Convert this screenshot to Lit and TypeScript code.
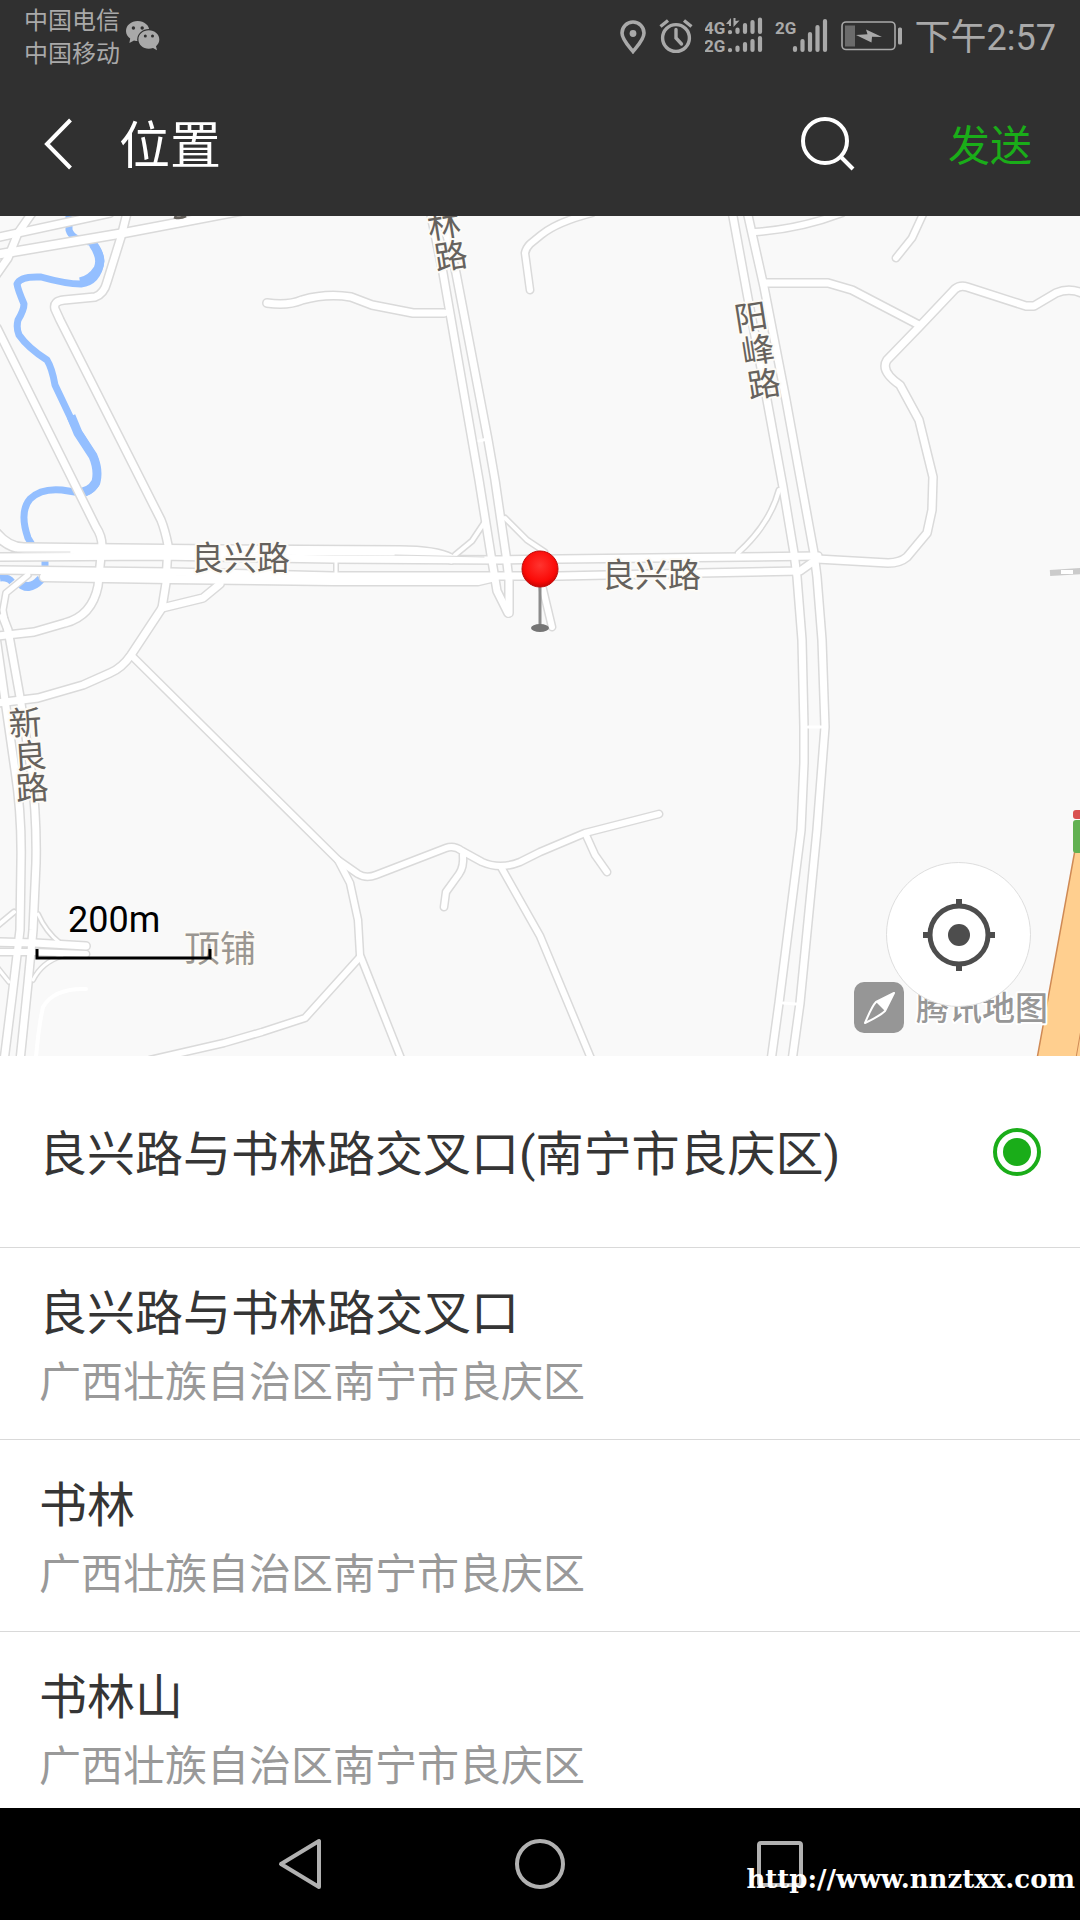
import { LitElement, html, svg, css } from "lit";
import { customElement, property, state } from "lit/decorators.js";

interface Place {
  name: string;
  address?: string;
}

interface Road {
  d: string;
  w: number;
}

interface Glyph {
  c: string;
  x: number;
  y: number;
  r: number;
}

const PLACES: Place[] = [
  { name: "良兴路与书林路交叉口(南宁市良庆区)" },
  { name: "良兴路与书林路交叉口", address: "广西壮族自治区南宁市良庆区" },
  { name: "书林", address: "广西壮族自治区南宁市良庆区" },
  { name: "书林山", address: "广西壮族自治区南宁市良庆区" },
];

const ROADS: Road[] = [
  // north-west
  { d: "M-5 22L110 -3", w: 7 },
  { d: "M-5 39L124 17L245 -6", w: 8 },
  { d: "M32 -3L18 17L8 42L-4 59", w: 7 },
  { d: "M127 -3L121 21L107 66Q104 78 95 81L64 84Q53 85 55 93L60 104L161 304Q165 314 168 329L166 367L162 392L131 439Q122 452 110 457L83 469L38 482L-3 487", w: 7 },
  { d: "M-3 112L96 311Q102 320 102 330L98 370Q92 400 65 407L34 416L-3 420", w: 7 },
  { d: "M220 368L203 382L162 392", w: 7 },
  // Liangxing Road
  { d: "M-5 316Q8 332 24 332L214 334L400 335Q435 335 451 343", w: 9 },
  { d: "M-5 341L160 340L333 343L500 344L560 343L818 340", w: 7 },
  { d: "M-5 354L170 356L333 360L560 360L700 357L800 355L817 343", w: 7 },
  { d: "M44 361L170 363L333 365L478 365L495 361", w: 8 },
  { d: "M28 359L6 377L3 394L8 420", w: 5 },
  { d: "M336 345V358", w: 3 },
  // Shulin Road
  { d: "M430 -6L443 57L479 264L491 339L497 375L508 397", w: 7 },
  { d: "M441 -6L456 57L488 224L495 264L506 339L509 364L509 397", w: 7 },
  { d: "M484 307L472 325L455 339", w: 4 },
  { d: "M505 302L527 324L545 336", w: 4 },
  { d: "M541 365L552 411", w: 6 },
  { d: "M267 87Q288 90 302 84Q327 77 351 81L372 89L413 97L444 97", w: 7 },
  { d: "M530 74L525 37Q526 32 530 28L541 19Q557 6 592 -3", w: 6 },
  // Yangfeng Road
  { d: "M732 -5L747 77L767 184L783 271L794 337L797 361L802 424L804 511L804 547L801 614L779 787L771 845", w: 7 },
  { d: "M747 -5L764 71L786 184L803 277L814 337L817 361L822 424L825 511L817 614L800 787L792 845", w: 7 },
  { d: "M779 274Q770 308 738 337", w: 4 },
  { d: "M817 343L888 347Q900 347 907 341L927 317L932 294L933 261L919 204L900 169Q880 155 887 144L919 111L955 73Q960 69 967 71L1026 90H1034L1056 77Q1070 71 1084 78", w: 7 },
  { d: "M765 67L828 67L852 74L919 109", w: 7 },
  { d: "M755 16Q800 13 842 -3", w: 6 },
  { d: "M924 -4L912 22L896 42", w: 6 },
  // south
  { d: "M131 439L338 644L358 658Q366 663 376 659L446 632Q454 629 462 635L482 646Q500 654 520 646L540 636L585 617L659 598", w: 6 },
  { d: "M338 644L350 667L358 704L360 739L402 845", w: 6 },
  { d: "M360 741L305 802L262 816L224 827L150 844", w: 6 },
  { d: "M463 639Q464 651 459 658L446 676L444 691", w: 6 },
  { d: "M501 651L540 720L592 845", w: 6 },
  { d: "M586 619L595 639L607 656", w: 6 },
  // Xinliang Road
  { d: "M-5 414L5 484L15 554Q22 600 21 647L20 714L12 781L4 845", w: 7 },
  { d: "M3 401L8 414L20 481L31 554Q37 600 36 647L33 714L28 767L20 845", w: 7 },
  { d: "M-5 726L35 727L86 730", w: 7 },
  { d: "M-5 736L35 736L86 738", w: 6 },
  { d: "M14 696L-4 711", w: 4 },
  { d: "M38 698Q46 716 60 727", w: 3 },
  { d: "M33 764Q42 746 62 740", w: 3 },
  { d: "M-3 751L9 766", w: 3 },
];

const LABELS: Glyph[] = [
  { c: "林", x: 444, y: 9, r: -9 },
  { c: "路", x: 451, y: 40, r: -9 },
  { c: "阳", x: 751, y: 101, r: -9 },
  { c: "峰", x: 758, y: 134, r: -9 },
  { c: "路", x: 764, y: 168, r: -9 },
  { c: "新", x: 25, y: 507, r: -4 },
  { c: "良", x: 30, y: 540, r: -4 },
  { c: "路", x: 32, y: 572, r: -4 },
];

@customElement("status-bar")
class StatusBar extends LitElement {
  static styles = css`
    :host {
      display: flex;
      align-items: center;
      justify-content: space-between;
      height: 72px;
      padding: 0 24px;
      color: #a9a9a9;
      fill: #a9a9a9;
    }
    .side {
      display: flex;
      align-items: center;
    }
    .carriers {
      font-size: 24px;
      line-height: 33px;
      padding-top: 4px;
      margin-right: 6px;
    }
    .right {
      gap: 12px;
    }
    .line {
      fill: none;
      stroke: #a9a9a9;
    }
    .net {
      font: bold 17px Roboto, sans-serif;
    }
    .charge {
      fill: #6b6b6b;
    }
    .hole {
      fill: #303030;
    }
    .time {
      font-size: 36px;
      line-height: 48px;
      padding-top: 4px;
    }
    svg {
      display: block;
    }
  `;

  render() {
    return html`
      <div class="side">
        <div class="carriers">
          <div>中国电信</div>
          <div>中国移动</div>
        </div>
        <svg width="34" height="32" viewBox="0 0 34 32" aria-hidden="true">
          <path d="M11.700 1C5.200 1 0 5.400 0 11C0 14 1.600 16.800 4.200 18.600L3.400 23L8 20.500Q10 21 12 21C18.200 21 23.400 16.600 23.400 11S18.200 1 11.700 1Z" />
          <circle class="hole" cx="7.400" cy="8" r="1.700" />
          <circle class="hole" cx="16.200" cy="8" r="1.700" />
          <ellipse class="hole" cx="22.800" cy="19.500" rx="11.600" ry="10.400" />
          <path d="M22.800 10.300C17 10.300 12.400 14.400 12.400 19.500S17 28.700 22.800 28.700Q25 28.700 27 28L31 30.200L30 26.200C32 24.600 33.300 22.200 33.300 19.500C33.300 14.400 28.600 10.300 22.800 10.300Z" />
          <circle class="hole" cx="19.300" cy="16" r="1.500" />
          <circle class="hole" cx="26.500" cy="16" r="1.500" />
        </svg>
      </div>
      <div class="side right">
        <svg width="28" height="36" viewBox="0 0 28 36" aria-hidden="true">
          <path class="line" stroke-width="3.600" d="M14 33.500C10 28.500 3 21.500 3 15A11 11 0 0 1 25 15C25 21.500 18 28.500 14 33.500Z" />
          <circle cx="14" cy="15.500" r="3.400" />
        </svg>
        <svg width="34" height="36" viewBox="0 0 34 36" aria-hidden="true">
          <g class="line" stroke-width="3.400">
            <circle cx="17" cy="20" r="13.400" />
            <path d="M17 11.500V20L22.500 26" stroke-linecap="round" />
            <path d="M1.500 8.500L9 2.500M32.500 8.500L25 2.500" />
          </g>
        </svg>
        <svg width="58" height="38" viewBox="0 0 58 38" aria-hidden="true">
          <text class="net" x="-1" y="17">4G</text>
          <text class="net" x="-1" y="35">2G</text>
          <path d="M21 7L26 1V9H24V7ZM28.500 1H30.500V4L34.500 3.500L28.500 10Z" />
          <g class="line" stroke-width="4.200" stroke-linecap="round">
            <path d="M25 15V15.200M32.500 12.500V15M40 8V15M47.500 5V15M55 2.500V15" />
            <path d="M25 33V33.200M32.500 30.500V33M40 27V33M47.500 24V33M55 21V33" />
          </g>
        </svg>
        <svg width="54" height="38" viewBox="0 0 54 38" aria-hidden="true">
          <text class="net" x="0" y="17">2G</text>
          <path class="line" stroke-width="4.200" stroke-linecap="round" d="M20 31V33M27.500 24V33M35 17V33M42.500 10V33M50 4V33" />
        </svg>
        <svg width="62" height="30" viewBox="0 0 62 30" aria-hidden="true">
          <rect class="line" x="1" y="1" width="53" height="27.500" rx="4" stroke-width="1.600" />
          <rect class="charge" x="4" y="4.500" width="10" height="21" />
          <path d="M15 14L26.500 13.300L25 8.500L41 16L31 15.800L30.500 21.500Z" />
          <rect x="57" y="6.500" width="4" height="17" rx="1.500" />
        </svg>
        <div class="time">下午2:57</div>
      </div>
    `;
  }
}

@customElement("title-bar")
class TitleBar extends LitElement {
  static styles = css`
    :host {
      display: flex;
      align-items: center;
      height: 144px;
      padding: 0 48px 0 44px;
      color: #fff;
    }
    button {
      border: 0;
      padding: 0;
      background: none;
      color: inherit;
      font: inherit;
      cursor: pointer;
    }
    svg {
      display: block;
      fill: none;
      stroke: #fff;
      stroke-width: 4;
    }
    h1 {
      flex: 1;
      margin: 0 0 0 47px;
      padding-top: 6px;
      font-size: 51px;
      line-height: 72px;
      font-weight: 400;
    }
    .send {
      margin-left: 92px;
      padding-top: 6px;
      font-size: 42px;
      line-height: 60px;
      color: #1aad19;
    }
  `;

  render() {
    return html`
      <button aria-label="返回">
        <svg width="28" height="52" viewBox="0 0 28 52"><path d="M26.500 2L3 26L26.500 50" /></svg>
      </button>
      <h1>位置</h1>
      <button aria-label="搜索">
        <svg width="56" height="56" viewBox="0 0 56 56">
          <circle cx="25" cy="25" r="22" />
          <path d="M40.500 40.500L53 53" />
        </svg>
      </button>
      <button class="send">发送</button>
    `;
  }
}

@customElement("map-view")
class MapView extends LitElement {
  static styles = css`
    :host {
      display: block;
      position: relative;
      aspect-ratio: 9 / 7;
      overflow: hidden;
      background: #f9f9f9;
    }
    .map {
      display: block;
      width: 100%;
      height: 100%;
    }
    .river {
      fill: none;
      stroke: #94bfff;
      stroke-width: 7;
      stroke-linejoin: round;
    }
    .river.wide {
      stroke-width: 9;
    }
    .casing,
    .road {
      fill: none;
      stroke-linejoin: round;
      stroke-linecap: round;
    }
    .casing {
      stroke: #dadada;
    }
    .road {
      stroke: #fff;
    }
    .label {
      font-size: 33px;
      fill: #66625d;
      stroke: #fdfbf6;
      stroke-width: 4;
      stroke-linejoin: round;
      paint-order: stroke;
    }
    .mid {
      text-anchor: middle;
    }
    .area {
      font-size: 36px;
      fill: #9a9691;
    }
    .scale {
      font: 36px Roboto, sans-serif;
      fill: #000;
    }
    .ruler {
      fill: none;
      stroke: #000;
      stroke-width: 3;
    }
    .brand {
      font-weight: 500;
      fill: #979797;
      stroke: #fff;
    }
    .locate {
      position: absolute;
      right: 49px;
      bottom: 49px;
      width: 145px;
      height: 145px;
      padding: 0;
      border: 1px solid #dedede;
      border-radius: 50%;
      background: #fff;
      display: grid;
      place-items: center;
      cursor: pointer;
    }
  `;

  render() {
    return html`
      <svg class="map" viewBox="0 0 1080 840" preserveAspectRatio="xMidYMid slice" role="img" aria-label="地图">
        <defs>
          <radialGradient id="ball" cx="0.5" cy="0.4" r="0.6">
            <stop offset="0" stop-color="#ff342f" />
            <stop offset="0.75" stop-color="#fb0a07" />
            <stop offset="1" stop-color="#c90502" />
          </radialGradient>
        </defs>
        <path class="river" d="M69 -2L69 14Q72 24 90 26Q100 33 101 45Q98 66 81 68Q66 68 41 61Q20 60 17 68Q18 74 24 88Q24 94 18 104Q16 112 19 119Q28 132 47 144Q52 152 55 169L74 209L93 239Q100 254 96 268Q90 277 81 277L62 274Q41 272 30 283Q19 296 28 322L34 332M45 345V351M0 362Q8 361 12 366" />
        <path class="river wide" d="M93 28Q103 42 98 53Q91 64 80 66M71 200L78 217L93 240Q99 254 96 266Q90 277 76 277" />
        <path class="river wide" d="M18 365Q28 377 41 363" />
        ${ROADS.map((r) => svg`<path class="casing" stroke-width=${r.w + 3} d=${r.d} />`)}
        ${ROADS.map((r) => svg`<path class="road" stroke-width=${r.w} d=${r.d} />`)}
        <path class="road" stroke-width="3" d="M808 511H822M783 787L796 788M479 225L487 223" />
        <path class="road" stroke-width="4" d="M36 841Q39 808 43 791Q54 772 86 773" />
        <path class="casing" stroke-width="1" d="M16 336H70M395 339L484 341" />
        <path d="M174 1Q180 3 186 0" fill="none" stroke="#66625d" stroke-width="3" />
        <path d="M1050 357L1082 355" fill="none" stroke="#cbcbcb" stroke-width="6" />
        <path d="M1061 356L1073 356" fill="none" stroke="#fff" stroke-width="4" />
        <path d="M1075 634L1037 843H1084V634Z" fill="#ffcf8f" stroke="#cf8a55" stroke-width="1.500" />
        <path d="M1082 808L1076 842" fill="none" stroke="#cf8a55" />
        <rect x="1073" y="594" width="14" height="9" rx="3" fill="#d9504f" />
        <rect x="1073" y="604" width="14" height="33" rx="3" fill="#62b152" />

        <text class="label" x="191" y="354">良兴路</text>
        <text class="label" x="602" y="371">良兴路</text>
        ${LABELS.map(
          (g) => svg`<text class="label mid" y="12" transform="translate(${g.x} ${g.y}) rotate(${g.r})">${g.c}</text>`
        )}
        <text class="label area" x="184" y="746">顶铺</text>
        <text class="scale" x="68" y="716">200m</text>
        <path class="ruler" d="M37 733V742H210V733" />

        <path d="M540 368V412" stroke="#8c8c8c" stroke-width="3" />
        <ellipse cx="540" cy="412" rx="9" ry="4" fill="#757575" />
        <circle cx="540" cy="353" r="18" fill="url(#ball)" stroke="#c00a08" />

        <rect x="854" y="766" width="50" height="51" rx="10" fill="#969696" />
        <path d="M894 777L876 786Q872 790 865 807Q880 800 885 795Z" fill="#969696" stroke="#fff" stroke-width="2" stroke-linejoin="round" />
        <path d="M894 777L876 786L885 795Z" fill="#fff" />
        <text class="label brand" x="916" y="804">腾讯地图</text>
      </svg>
      <button class="locate" aria-label="定位">
        <svg width="76" height="76" viewBox="0 0 76 76" fill="none" stroke="#4d4d4d" stroke-width="5">
          <circle cx="38" cy="38" r="29" />
          <circle cx="38" cy="38" r="11" fill="#4d4d4d" stroke="none" />
          <path d="M38 2V10M38 66V74M2 38H10M66 38H74" stroke-width="6" />
        </svg>
      </button>
    `;
  }
}

@customElement("place-list")
class PlaceList extends LitElement {
  @property({ attribute: false }) places: Place[] = [];
  @state() private selected = 0;

  static styles = css`
    :host {
      display: block;
      background: #fff;
    }
    .row {
      box-sizing: border-box;
      display: flex;
      align-items: center;
      justify-content: space-between;
      height: 192px;
      padding: 0 39px;
      border-bottom: 1px solid #d9d9d9;
      cursor: pointer;
    }
    .text {
      padding-top: 7px;
    }
    .name {
      display: block;
      font-size: 48px;
      line-height: 72px;
      color: #353535;
    }
    .address {
      display: block;
      font-size: 42px;
      line-height: 66px;
      color: #999;
    }
    .radio {
      appearance: none;
      flex: none;
      box-sizing: border-box;
      width: 48px;
      height: 48px;
      margin: 0;
      border-radius: 50%;
    }
    .radio:checked {
      border: 4px solid #1aad19;
      padding: 6px;
      background: #1aad19 content-box;
    }
  `;

  render() {
    return this.places.map(
      (p, i) => html`
        <label class="row">
          <span class="text">
            <span class="name">${p.name}</span>
            ${p.address ? html`<span class="address">${p.address}</span>` : null}
          </span>
          <input
            class="radio"
            type="radio"
            name="place"
            .checked=${i === this.selected}
            @change=${() => (this.selected = i)}
          />
        </label>
      `
    );
  }
}

@customElement("nav-bar")
class NavBar extends LitElement {
  static styles = css`
    :host {
      position: relative;
      display: flex;
      align-items: center;
      justify-content: center;
      gap: 120px;
      height: 112px;
      background: #000;
    }
    button {
      display: grid;
      place-items: center;
      width: 120px;
      height: 96px;
      padding: 0;
      border: 0;
      background: none;
      cursor: pointer;
    }
    svg {
      fill: none;
      stroke: #b1b1b1;
      stroke-width: 4;
      stroke-linejoin: round;
    }
    .site {
      position: absolute;
      right: 5px;
      bottom: 25px;
      font: bold 26px/32px "DejaVu Serif", serif;
      color: #fff;
      text-decoration: none;
    }
  `;

  render() {
    return html`
      <button aria-label="后退">
        <svg width="52" height="52" viewBox="0 0 52 52"><path d="M45 3V49L7 26Z" /></svg>
      </button>
      <button aria-label="主屏幕">
        <svg width="52" height="52" viewBox="0 0 52 52"><circle cx="26" cy="26" r="23" /></svg>
      </button>
      <button aria-label="最近任务">
        <svg width="52" height="52" viewBox="0 0 52 52"><rect x="5" y="5" width="42" height="42" rx="2" /></svg>
      </button>
      <a class="site" href="http://www.nnztxx.com">http://www.nnztxx.com</a>
    `;
  }
}

@customElement("app-root")
class AppRoot extends LitElement {
  static styles = css`
    :host {
      display: flex;
      flex-direction: column;
      height: 100vh;
      overflow: hidden;
      font-family: Roboto, "Noto Sans CJK SC", sans-serif;
    }
    .header,
    .map,
    .nav {
      flex: none;
    }
    .header {
      background: #303030;
    }
    .list {
      flex: 1;
      min-height: 0;
      overflow: hidden;
    }
  `;

  render() {
    return html`
      <header class="header">
        <status-bar></status-bar>
        <title-bar></title-bar>
      </header>
      <map-view class="map"></map-view>
      <place-list class="list" .places=${PLACES}></place-list>
      <nav-bar class="nav"></nav-bar>
    `;
  }
}
